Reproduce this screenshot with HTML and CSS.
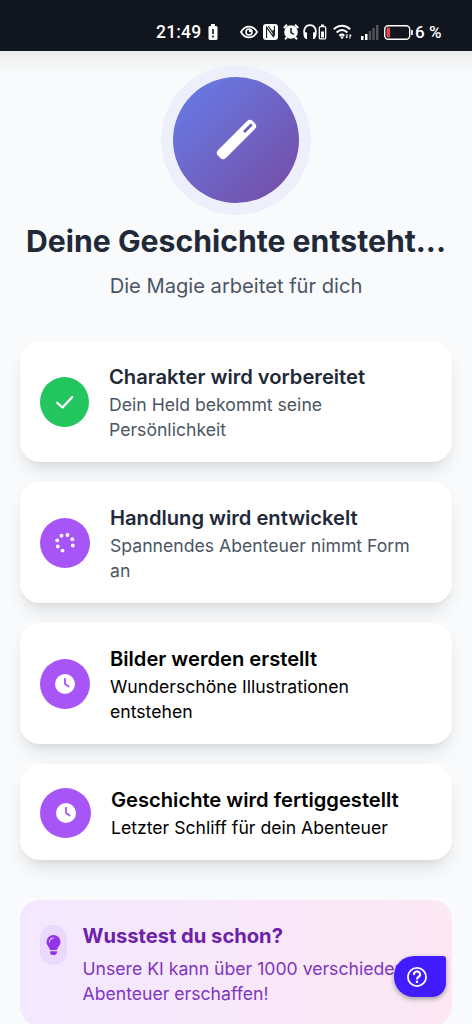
FILE: index.html
```html
<!DOCTYPE html>
<html lang="de">
<head>
<meta charset="utf-8">
<title>Deine Geschichte entsteht</title>
<link rel="stylesheet" href="styles.css">
</head>
<body>
<header class="statusbar">
  <span class="time">21:49</span>
  <svg class="battery-alert" width="10" height="16" viewBox="0 0 10 16"><path d="M3 0h4v2h1.5l1 1v12l-1 1h-7l-1-1V3l1-1H3z" fill="#fff"/><path d="M5 5v5M5 11.5v2" stroke="#11151d" stroke-width="1.6"/></svg>
  <svg class="eye" width="18" height="14" viewBox="0 0 18 14"><path d="M1 7C5-.2 13-.2 17 7 13 14.2 5 14.2 1 7z" fill="none" stroke="#fff" stroke-width="1.7"/><circle cx="9" cy="7" r="3" fill="none" stroke="#fff" stroke-width="1.6"/><circle cx="10" cy="6" r="1.2" fill="#fff"/></svg>
  <svg class="nfc" width="15" height="16" viewBox="0 0 15 16"><rect width="15" height="16" rx="3" fill="#fff"/><path d="M3.6 14V3.200l6.600 9.300V6M5.200 2l6.200 9V2" fill="none" stroke="#11151d" stroke-width="1.100"/></svg>
  <svg class="alarm" width="16" height="16" viewBox="0 0 16 16"><circle cx="8" cy="8" r="6.8" fill="#fff"/><path d="M.8 4 4 .8M15.2 4 12 .8M2 15.2l2-2M14 15.2l-2-2" stroke="#fff" stroke-width="2"/><path d="M8 4v4.5l3 2" fill="none" stroke="#11151d" stroke-width="1.5"/></svg>
  <svg class="headset" width="24" height="16" viewBox="0 0 24 16"><path d="M2.5 13.5C-1 5 3 1.2 7 1.2S15 5 11.5 13.5" fill="none" stroke="#fff" stroke-width="1.8"/><path d="M1 8l3 .5V15H2.5L.8 12zM13 8l-3 .5V15h1.500l1.700-3z" fill="#fff"/><path d="M18 .5h3V3h-3z" fill="#fff"/><rect x="16.300" y="2.700" width="6.400" height="12.200" rx="1.200" fill="none" stroke="#fff" stroke-width="1.300"/><path d="M18 7.500h3v6h-3z" fill="#fff"/></svg>
  <svg class="wifi" width="19" height="16" viewBox="0 0 19 16"><g fill="none" stroke="#fff" stroke-width="2"><path d="M.8 5.300C5.500.6 12.500.6 17.200 5.300M3.600 8.600c3.500-3.300 7.300-3.300 10.800 0M6.300 11.700q2.700-2.200 5 0"/></g><path d="M7 12.500h4l-2 2.700z" fill="#fff"/><path d="M14 10v4M12.800 12.500 14 14M17 14.500v-4M18.200 12 17 10.500" stroke="#fff" stroke-width="1.100"/></svg>
  <svg class="signal" width="18" height="15" viewBox="0 0 18 15"><path d="M0 11h2.500v4H0zM4 9h2.500v6H4z" fill="#fff"/><path d="M7.700 6h2.500v9H7.700zM11.300 3h2.500v12h-2.500zM15 0h2.500v15H15z" fill="#50535a"/></svg>
  <svg class="battery" width="30" height="15" viewBox="0 0 30 15"><rect x=".7" y=".7" width="25" height="13.600" rx="3.500" fill="none" stroke="#fff" stroke-width="1.400"/><rect x="2.500" y="2.500" width="3.600" height="10" rx="1.300" fill="#e04b50"/><path d="M28 5v5" stroke="#fff" stroke-width="1.700"/></svg>
  <span class="percent">6 %</span>
</header>
<main class="page">
  <section class="hero">
    <div class="hero-icon">
      <svg width="126" height="126" viewBox="0 0 126 126"><g transform="translate(63.500 62.500) rotate(-45)"><rect x="-24.500" y="-5.500" width="49" height="11" rx="4" fill="#fff"/><rect x="10.500" y="-1.400" width="11" height="2.800" rx=".6" fill="#6b5fc0"/></g></svg>
    </div>
    <h1>Deine Geschichte entsteht...</h1>
    <p>Die Magie arbeitet für dich</p>
  </section>
  <section class="steps">
    <article class="card">
      <div class="badge badge-done"><svg width="20" height="20" viewBox="0 0 20 20"><path d="M2.300 10.800 7.500 15.500 17.300 5" fill="none" stroke="#fff" stroke-width="2.300" stroke-linecap="round" stroke-linejoin="round"/></svg></div>
      <div class="text"><h2>Charakter wird vorbereitet</h2><p>Dein Held bekommt seine Persönlichkeit</p></div>
    </article>
    <article class="card">
      <div class="badge"><svg width="22" height="22" viewBox="0 0 22 22" fill="#fff"><circle cx="7.500" cy="3.700" r="1.900"/><circle cx="13.500" cy="3" r="1.900"/><circle cx="18.300" cy="7.200" r="1.900"/><circle cx="18.800" cy="13.500" r="1.900"/><circle cx="8.500" cy="18.600" r="1.900"/><circle cx="3.800" cy="14.500" r="1.900"/><circle cx="3.200" cy="8.300" r="1.900"/></svg></div>
      <div class="text"><h2>Handlung wird entwickelt</h2><p>Spannendes Abenteuer nimmt Form an</p></div>
    </article>
    <article class="card waiting">
      <div class="badge"><svg width="20" height="20" viewBox="0 0 20 20"><circle cx="10" cy="10" r="10" fill="#fff"/><path d="M10 4.700V10l3.700 2.500" fill="none" stroke="#a855f7" stroke-width="1.800" stroke-linecap="round" stroke-linejoin="round"/></svg></div>
      <div class="text"><h2>Bilder werden erstellt</h2><p>Wunderschöne Illustrationen entstehen</p></div>
    </article>
    <article class="card waiting">
      <div class="badge badge-last"><svg width="20" height="20" viewBox="0 0 20 20"><circle cx="10" cy="10" r="10" fill="#fff"/><path d="M10 4.700V10l3.700 2.500" fill="none" stroke="#a855f7" stroke-width="1.800" stroke-linecap="round" stroke-linejoin="round"/></svg></div>
      <div class="text"><h2>Geschichte wird fertiggestellt</h2><p>Letzter Schliff für dein Abenteuer</p></div>
    </article>
  </section>
  <section class="fact">
    <div class="bulb"><svg width="15" height="20" viewBox="0 0 15 20"><path d="M7.500 0A7 7 0 0 0 .5 7c0 3.200 2.800 4.800 3.500 8h7c.7-3.200 3.500-4.800 3.500-8a7 7 0 0 0-7-7zM4 16.200h7v.8a3 3 0 0 1-3 3H7a3 3 0 0 1-3-3z" fill="#9333ea"/><path d="M3.500 7A4 4 0 0 1 7.500 3" fill="none" stroke="#ead9fc" stroke-width="1.100" stroke-linecap="round"/></svg></div>
    <div class="fact-text"><h2>Wusstest du schon?</h2><p>Unsere KI kann über 1000 verschiedene Abenteuer erschaffen!</p></div>
  </section>
</main>
<button class="help" aria-label="Hilfe"><svg width="20" height="20" viewBox="0 0 20 20" fill="none" stroke="#fff"><circle cx="10" cy="10" r="9.100" stroke-width="1.800"/><path d="M7.100 8A3 3 0 1 1 11.500 10Q10 10.800 10 12.400" stroke-width="2.100"/><path d="M10 13.700v2.200" stroke-width="2.200"/></svg></button>
</body>
</html>
```
FILE: styles.css
```css
* { box-sizing: border-box; }
body {
  margin: 0;
  height: 1024px;
  overflow: hidden;
  background: #f8fafc;
  font-family: Inter, "Liberation Sans", sans-serif;
}
h1, h2, p { margin: 0; }
svg { display: block; flex: none; }

.statusbar {
  height: 51px;
  padding: 13px 0 0 156px;
  display: flex;
  align-items: center;
  background: #11151d;
  color: #fff;
  font: 500 17px/20px Roboto, sans-serif;
  white-space: nowrap;
}
.time { width: 52px; font-size: 17.5px; letter-spacing: .2px; }
.eye { margin-left: 22px; }
.nfc { margin-left: 5px; }
.alarm { margin-left: 5px; }
.headset { margin-left: 4px; }
.wifi { margin-left: 6px; }
.signal { margin-left: 9px; }
.battery { margin-left: 5px; }
.percent { margin-left: 1px; }

.page {
  padding: 26px 20px 0;
  background: linear-gradient(#e9e9e9 0, #f2f3f3 8px, #f8fafc 24px);
}
.hero {
  display: flex;
  flex-direction: column;
  align-items: center;
  text-align: center;
}
.hero-icon {
  width: 126px;
  height: 126px;
  border-radius: 50%;
  background: linear-gradient(135deg, #667eea, #764ba2);
  box-shadow: 0 0 0 12px #edeffb;
}
h1 {
  margin-top: 18px;
  font-size: 30.200px;
  line-height: 40px;
  font-weight: 700;
  color: #1f2937;
  white-space: nowrap;
}
.hero p {
  margin-top: 10px;
  font-size: 20.150px;
  line-height: 30px;
  color: #4b5563;
}
.steps {
  margin-top: 40px;
  display: flex;
  flex-direction: column;
  gap: 20px;
}
.card {
  display: flex;
  align-items: center;
  gap: 20px;
  padding: 21px 20px 20px;
  border-radius: 20px;
  background: #fff;
  box-shadow: 0 12px 19px -4px rgba(0,0,0,.1), 0 5px 8px -5px rgba(0,0,0,.1);
  color: #4b5563;
}
.badge {
  flex: none;
  width: 50px;
  height: 50px;
  border-radius: 50%;
  background: #a855f7;
  display: flex;
  align-items: center;
  justify-content: center;
}
.badge-done { width: 49px; background: #22c55e; }
.badge-last { width: 51px; }
h2 {
  font-size: 20.150px;
  line-height: 30px;
  font-weight: 600;
  color: #1f2937;
}
.text p, .fact p {
  font-size: 17.640px;
  line-height: 25px;
}
.waiting, .waiting h2 { color: #000; }
.fact {
  margin-top: 40px;
  height: 126px;
  padding: 21px 20px 19px;
  display: flex;
  align-items: flex-start;
  gap: 15.500px;
  border-radius: 20px;
  background: linear-gradient(90deg, #f3e8ff, #fce7f3);
}
.bulb {
  flex: none;
  margin-top: 4px;
  width: 27px;
  height: 40px;
  border-radius: 14px;
  background: #ead9fc;
  display: flex;
  align-items: center;
  justify-content: center;
}
.fact h2 { font-weight: 700; color: #6b21a8; }
.fact p { margin-top: 5px; color: #7e35c0; }
.help {
  position: fixed;
  left: 394px;
  top: 956px;
  width: 52px;
  height: 41px;
  padding: 0 7px 0 0;
  border: 0;
  border-radius: 20px 3px 14px 20px;
  background: #401cff;
  box-shadow: 0 2px 5px rgba(0,0,0,.35);
  display: flex;
  align-items: center;
  justify-content: center;
}
```
